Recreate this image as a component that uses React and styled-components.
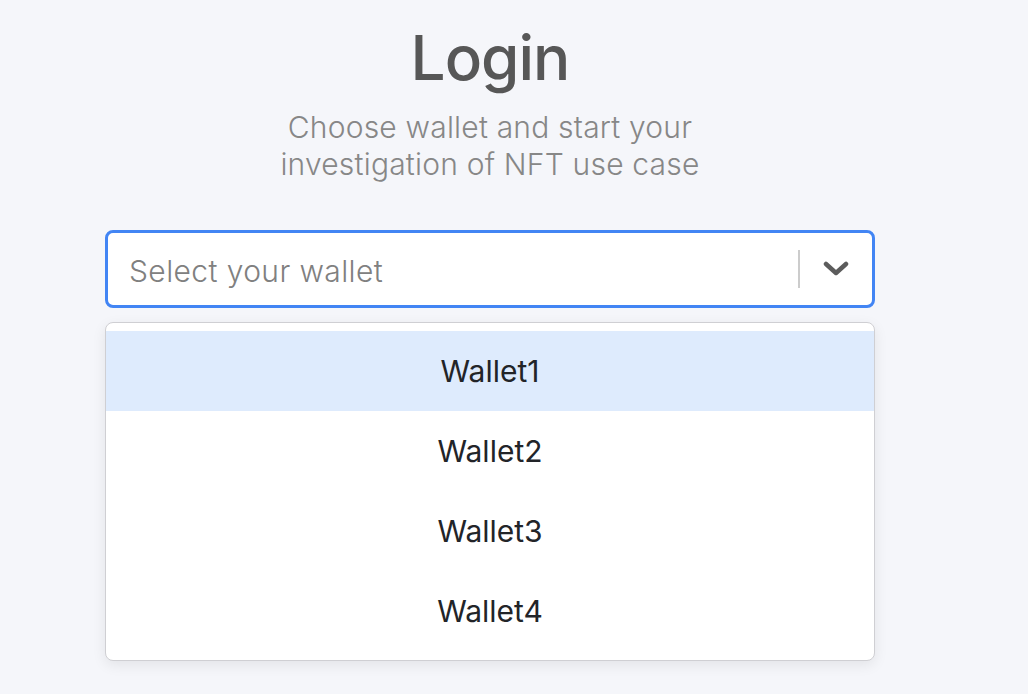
import React, { useState } from "react";
import styled, { createGlobalStyle } from "styled-components";

const GlobalStyle = createGlobalStyle`
  html, body {
    margin: 0;
    padding: 0;
    background: #f5f6fa;
    font-family: Inter, "Noto Sans", "Liberation Sans", sans-serif;
  }
`;

const Page = styled.div`
  width: 1028px;
  height: 694px;
  overflow: hidden;
  display: flex;
  justify-content: center;
  padding-right: 48px;
  box-sizing: border-box;
`;

const Column = styled.div`
  width: 770px;
  display: flex;
  flex-direction: column;
  align-items: center;
  padding-top: 18px;
`;

const Title = styled.h1`
  margin: 0;
  font-size: 62px;
  font-weight: 500;
  line-height: 80px;
  color: #575757;
  letter-spacing: -1px;
`;

const Subtitle = styled.p`
  margin: 11px 0 0;
  width: 480px;
  text-align: center;
  font-size: 30px;
  line-height: 37px;
  font-weight: 300;
  letter-spacing: 0.2px;
  color: #878787;
`;

const Control = styled.div`
  margin-top: 47px;
  width: 100%;
  height: 78px;
  box-sizing: border-box;
  background: #fff;
  border: 3px solid #4285f4;
  border-radius: 8px;
  display: flex;
  align-items: center;
`;

const Placeholder = styled.div`
  flex: 1;
  padding: 3px 0 0 21px;
  font-size: 30px;
  font-weight: 300;
  letter-spacing: 0.4px;
  color: #808080;
`;

const Separator = styled.span`
  width: 2px;
  height: 38px;
  background: #cccccc;
`;

const Indicator = styled.div`
  width: 72px;
  display: flex;
  justify-content: center;
  align-items: center;
  color: #5c5c5c;
`;

const Menu = styled.div`
  margin-top: 14px;
  width: 100%;
  box-sizing: border-box;
  background: #fff;
  border: 1px solid #cfcfd3;
  border-radius: 8px;
  padding: 8px 0 9px;
  box-shadow: 0 4px 14px rgba(0, 0, 0, 0.08);
`;

const Option = styled.div`
  height: 80px;
  display: flex;
  align-items: center;
  justify-content: center;
  font-size: 30px;
  font-weight: 400;
  color: #222428;
  background: ${(p) => (p.$active ? "#deebfd" : "transparent")};
  cursor: pointer;
`;

const wallets = ["Wallet1", "Wallet2", "Wallet3", "Wallet4"];

export default function App() {
  const [active, setActive] = useState(0);
  return (
    <>
      <GlobalStyle />
      <Page>
        <Column>
          <Title>Login</Title>
          <Subtitle>
            Choose wallet and start your investigation of NFT use case
          </Subtitle>
          <Control>
            <Placeholder>Select your wallet</Placeholder>
            <Separator />
            <Indicator>
              <svg width="26" height="16" viewBox="0 0 26 16">
                <path
                  d="M3 3 L13 12 L23 3"
                  fill="none"
                  stroke="currentColor"
                  strokeWidth="4.5"
                  strokeLinecap="round"
                  strokeLinejoin="round"
                />
              </svg>
            </Indicator>
          </Control>
          <Menu>
            {wallets.map((w, i) => (
              <Option
                key={w}
                $active={i === active}
                onMouseEnter={() => setActive(i)}
              >
                {w}
              </Option>
            ))}
          </Menu>
        </Column>
      </Page>
    </>
  );
}
